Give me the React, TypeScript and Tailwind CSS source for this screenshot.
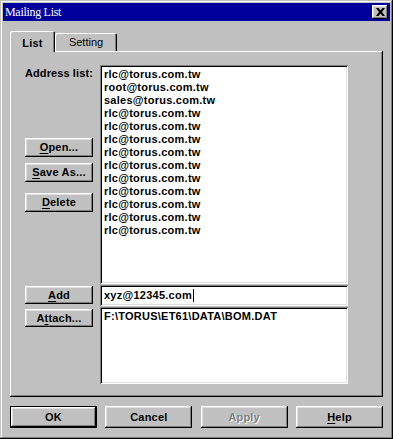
import React from "react";

const raised =
  "shadow-[inset_-1px_-1px_#000,inset_1px_1px_#fff,inset_-2px_-2px_#808080,inset_2px_2px_#dfdfdf]";
const sunken =
  "shadow-[inset_1px_1px_#808080,inset_-1px_-1px_#fff,inset_2px_2px_#000,inset_-2px_-2px_#dfdfdf]";

const ADDRESSES = [
  "rlc@torus.com.tw",
  "root@torus.com.tw",
  "sales@torus.com.tw",
  "rlc@torus.com.tw",
  "rlc@torus.com.tw",
  "rlc@torus.com.tw",
  "rlc@torus.com.tw",
  "rlc@torus.com.tw",
  "rlc@torus.com.tw",
  "rlc@torus.com.tw",
  "rlc@torus.com.tw",
  "rlc@torus.com.tw",
  "rlc@torus.com.tw",
];

function Btn({
  children,
  className = "",
}: {
  children: React.ReactNode;
  className?: string;
}) {
  return (
    <div
      className={`flex items-center justify-center bg-[#c0c0c0] text-[11px] font-bold tracking-[0.2px] text-black ${raised} ${className}`}
    >
      {children}
    </div>
  );
}

function Key({ c }: { c: string }) {
  return <span className="underline underline-offset-[2px]">{c}</span>;
}

export default function App() {
  return (
    <div className="w-[393px] h-[439px] bg-[#c0c0c0] p-[3px] flex flex-col font-['Liberation_Sans',Arial,sans-serif] shadow-[inset_-1px_-1px_#000,inset_1px_1px_#c0c0c0,inset_-2px_-2px_#808080,inset_2px_2px_#fff]">
      {/* title bar */}
      <div className="h-[18px] bg-[#00009c] flex items-center justify-between pl-[2px] pr-[2px]">
        <span className="text-white text-[12px] leading-none tracking-[-0.3px] font-['Liberation_Serif',serif]">
          Mailing List
        </span>
        <div className={`w-[16px] h-[14px] bg-[#c0c0c0] flex items-center justify-center ${raised}`}>
          <svg width="9" height="8" viewBox="0 0 9 8" className="mb-[1px]">
            <path d="M0 0h2.5l2 2.5 2-2.5H9L6 4l3 4H6.5l-2-2.5-2 2.5H0l3-4z" fill="#000" />
          </svg>
        </div>
      </div>

      <div className="pl-[7px] pt-[10px] flex flex-col">
        {/* tabs */}
        <div className="flex items-end h-[20px]">
          <div className="relative z-10 w-[45px] h-[21px] -mb-px bg-[#c0c0c0] rounded-t-[2px] flex items-center justify-center pt-[3px] text-[11px] font-bold tracking-[0.2px] shadow-[inset_1px_1px_#fff,inset_-1px_0_#000,inset_-2px_0_#808080]">
            List
          </div>
          <div className="w-[62px] h-[18px] bg-[#c0c0c0] rounded-t-[2px] flex items-center justify-center pt-[1px] text-[11px] shadow-[inset_1px_1px_#fff,inset_-1px_0_#000,inset_-2px_0_#808080]">
            Setting
          </div>
        </div>

        {/* panel */}
        <div className="w-[373px] h-[346px] bg-[#c0c0c0] pt-[14px] flex flex-col shadow-[inset_-1px_-1px_#000,inset_1px_1px_#fff,inset_-2px_-2px_#808080]">
          <div className="flex">
            <div className="w-[90px] pl-[15px] flex flex-col">
              <div className="mt-[2px] text-[11px] leading-[13px] font-bold tracking-[0.1px]">Address list:</div>
              <Btn className="mt-[58px] w-[68px] h-[19px]">
                <Key c="O" />
                pen...
              </Btn>
              <Btn className="mt-[6px] w-[68px] h-[19px]">
                <Key c="S" />
                ave As...
              </Btn>
              <Btn className="mt-[11px] w-[68px] h-[19px]">
                <Key c="D" />
                elete
              </Btn>
            </div>
            <div className={`w-[248px] h-[219px] bg-white pl-[4px] pt-[3px] ${sunken}`}>
              {ADDRESSES.map((a, i) => (
                <div key={i} className="text-[11px] leading-[13px] font-bold tracking-[0.25px]">
                  {a}
                </div>
              ))}
            </div>
          </div>

          <div className="flex mt-[1px]">
            <div className="w-[90px] pl-[15px]">
              <Btn className="mt-[1px] w-[68px] h-[18px]">
                <Key c="A" />
                dd
              </Btn>
            </div>
            <div className={`w-[248px] h-[21px] bg-white pl-[4px] flex items-center ${sunken}`}>
              <span className="text-[11px] font-bold tracking-[0.25px]">xyz@12345.com</span>
              <span className="w-px h-[13px] bg-black ml-px" />
            </div>
          </div>

          <div className="flex mt-[1px]">
            <div className="w-[90px] pl-[15px]">
              <Btn className="mt-[2px] w-[68px] h-[18px]">
                A<Key c="t" />
                tach...
              </Btn>
            </div>
            <div className={`w-[248px] h-[77px] bg-white pl-[4px] pt-[3px] ${sunken}`}>
              <div className="text-[11px] leading-[13px] font-bold tracking-[0.25px]">F:\TORUS\ET61\DATA\BOM.DAT</div>
            </div>
          </div>
        </div>

        {/* bottom buttons */}
        <div className="w-[373px] mt-[9px] flex justify-between">
          <div className="w-[87px] h-[22px] flex items-center justify-center bg-[#c0c0c0] text-[11px] font-bold tracking-[0.2px] shadow-[inset_0_0_0_1px_#000,inset_-2px_-2px_#000,inset_2px_2px_#fff,inset_-3px_-3px_#808080,inset_3px_3px_#dfdfdf]">
            OK
          </div>
          <Btn className="w-[87px] h-[22px]">Cancel</Btn>
          <Btn className="w-[87px] h-[22px]">
            <span className="text-[#808080] [text-shadow:1px_1px_0_#fff]">Apply</span>
          </Btn>
          <Btn className="w-[87px] h-[22px]">
            <Key c="H" />
            elp
          </Btn>
        </div>
      </div>
    </div>
  );
}
